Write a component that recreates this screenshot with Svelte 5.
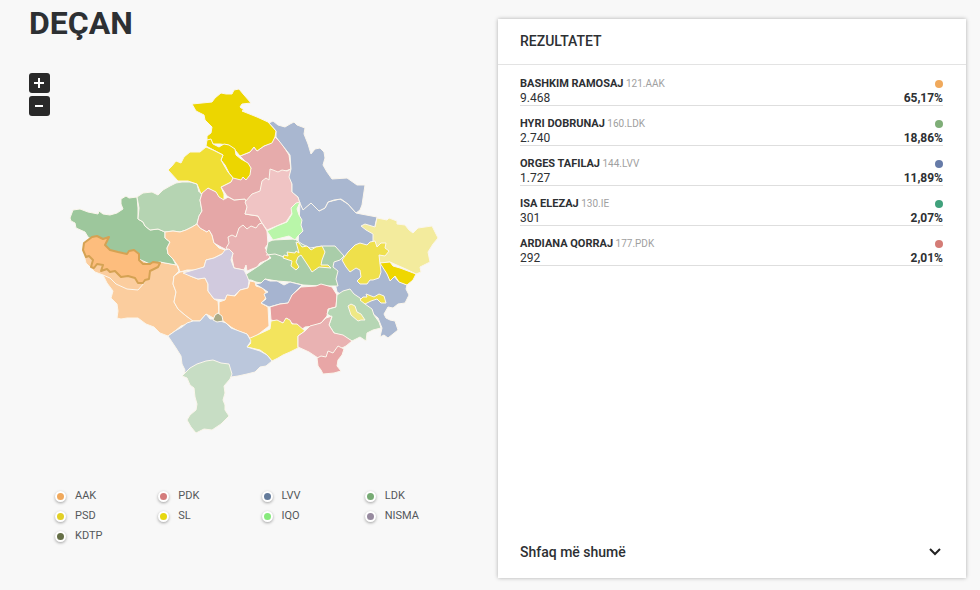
<script lang="ts">
	interface Region {
		id: string;
		fill: string;
		d: string;
	}

	interface Candidate {
		name: string;
		party: string;
		votes: string;
		percent: string;
		color: string;
	}

	// larger areas come first, enclaves are painted over them
	const regions: Region[] = [
		{ id: 'gjakove', fill: '#fbcd9e', d: 'M84 255L86 263L91 268L95 272L103 275L107 283L113 291L111 298L117 304L118 311L117 318L121 319L127 318L138 318L146 324L154 327L160 333L168 336L175 331L181 326L190 323L193 321L185 315L178 309L174 302L176 292L173 284L174 276L179 271L177 265L160 262L130 248L100 250Z' },
		{ id: 'peje', fill: '#9dc79c', d: 'M70 218L73 210L80 209L88 212L98 214L99 211L103 214L110 215L117 213L123 209L121 204L121 199L126 196L129 198L137 197L138 208L138 219L143 222L145 226L150 230L158 229L165 232L165 238L170 242L167 248L168 254L173 259L176 265L160 262L150 264L141 260L130 254L110 252L100 245L88 237L85 232L76 228L75 223L71 221Z' },
		{ id: 'istog', fill: '#b5d4b2', d: 'M137 197L143 193L152 192L158 195L163 190L170 186L176 183L182 182L190 182L197 184L199 192L203 192L200 200L202 211L199 216L197 224L192 227L186 230L180 232L173 231L165 232L158 229L150 230L145 226L143 222L138 219L139 208Z' },
		{ id: 'kline', fill: '#fccb9a', d: 'M165 232L173 231L180 232L186 230L192 227L197 224L200 228L207 232L209 230L212 235L214 243L219 248L228 251L222 254L214 258L206 260L204 267L196 270L187 270L180 272L178 266L173 259L168 254L167 248L170 242L165 238Z' },
		{ id: 'rahovec', fill: '#fccb9a', d: 'M180 272L187 271L190 276L198 279L205 278L208 284L208 291L214 299L218 301L219 312L215 319L210 316L206 314L200 321L193 321L185 315L178 309L174 302L176 292L173 284L174 276Z' },
		{ id: 'skenderaj', fill: '#e5a7a7', d: 'M203 190L208 188L215 191L225 199L228 197L234 200L245 199L248 205L245 214L258 216L262 223L267 230L258 240L236 250L227 250L221 247L214 243L212 235L209 230L207 232L200 228L197 224L199 216L202 211L200 200Z' },
		{ id: 'mitrovice', fill: '#e6abab', d: 'M240 156L250 152L254 147L257 151L264 146L271 143L275 137L282 144L289 155L291 169L283 172L276 182L262 194L247 203L245 199L234 200L227 196L221 187L231 182L233 177L248 177L251 168L247 163Z' },
		{ id: 'vushtrri', fill: '#f0c4c4', d: 'M270 169L273 170L278 172L282 170L287 171L291 169L290 177L292 184L292 192L298 197L300 203L293 207L292 213L286 222L267 230L262 223L258 216L245 214L247 207L245 202L252 194L260 191L262 181L266 178L269 180Z' },
		{ id: 'drenas', fill: '#e9b2b2', d: 'M228 237L232 235L236 237L239 228L243 225L247 229L251 226L256 228L259 224L262 223L267 231L268 244L265 248L271 256L267 260L260 263L257 267L247 271L246 265L244 270L234 268L232 258L233 253L226 248L229 243Z' },
		{ id: 'prishtine', fill: '#a9b7d0', d: 'M300 203L303 209L311 203L319 211L325 208L328 202L340 199L348 204L356 213L361 214L377 217L375 226L385 242L382 262L398 281L407 285L406 289L409 295L405 303L398 304L393 308L388 307L384 314L386 318L390 320L395 321L398 330L388 338L384 335L380 337L382 328L378 318L366 308L337 292L332 268L298 245Z' },
		{ id: 'podujeve', fill: '#a9b7d0', d: 'M269 123L273 121L278 125L285 127L290 124L294 122L297 125L305 128L304 134L308 144L311 154L315 149L320 148L324 152L325 158L323 165L327 172L332 179L347 178L357 185L365 185L362 205L360 210L356 213L348 204L341 199L334 200L328 202L325 208L319 211L314 206L311 203L303 210L300 203L298 197L292 192L292 184L289 177L291 169L290 155L283 146L276 137L276 131Z' },
		{ id: 'lipjan', fill: '#a9cda9', d: 'M245 275L251 271L260 265L264 262L271 258L266 252L268 242L273 240L295 239L302 244L310 248L323 246L335 246L344 256L340 260L334 262L333 267L338 271L336 279L338 286L321 286L303 285L290 282L277 281L265 279L261 283L256 282L251 280L246 280Z' },
		{ id: 'obiliq', fill: '#b9f6a9', d: 'M267 231L277 226L287 222L292 214L291 208L296 203L300 202L297 209L299 215L302 220L301 225L303 231L298 236L295 240L289 236L281 238L273 240Z' },
		{ id: 'gracanice', fill: '#ecdf3c', d: 'M283 258L284 255L288 256L287 252L295 253L296 251L299 253L296 242L299 243L302 247L307 246L311 250L316 247L322 246L325 252L322 260L321 265L328 265L331 268L319 267L312 272L309 267L305 261L301 255L298 257L296 262L299 267L296 270L291 266L292 261Z' },
		{ id: 'leposaviq', fill: '#ecd600', d: 'M192 104L202 103L212 102L215 98L221 93L226 94L232 94L234 90L239 89L244 95L251 103L242 104L240 107L244 110L242 111L257 117L268 122L276 131L275 137L272 143L264 146L257 151L254 147L250 152L240 156L235 150L228 145L220 144L213 144L207 140L207 136L211 133L212 127L205 120L204 115L196 111Z' },
		{ id: 'zvecan', fill: '#ecd600', d: 'M207 140L211 139L213 144L219 147L224 144L229 145L235 149L236 155L241 159L248 163L251 168L250 175L246 180L243 177L241 180L233 178L229 173L225 165L221 160L223 155L206 146Z' },
		{ id: 'zubin', fill: '#f0df35', d: 'M168 170L172 166L176 161L181 163L184 157L190 152L200 152L206 147L213 150L223 155L221 160L225 167L228 172L233 178L231 182L221 187L224 194L224 200L219 197L216 192L208 188L201 194L197 184L188 181L178 181Z' },
		{ id: 'malisheve', fill: '#d1cade', d: 'M183 273L197 269L204 267L206 260L214 258L222 254L225 250L229 249L233 253L231 260L234 268L244 270L247 276L249 281L248 288L240 290L234 296L227 295L225 300L214 299L208 291L208 284L205 278L198 279L190 276Z' },
		{ id: 'suhareke', fill: '#fdc690', d: 'M219 302L225 300L227 295L235 296L240 290L248 288L250 281L255 282L256 286L263 288L267 294L265 299L261 303L268 307L269 326L251 340L247 334L238 331L231 327L226 323L219 318Z' },
		{ id: 'shtime', fill: '#a6b4d0', d: 'M255 284L261 283L265 279L270 281L277 281L284 285L290 282L302 285L297 290L292 295L289 303L280 304L269 307L261 303L266 299L264 294L268 292L262 288Z' },
		{ id: 'ferizaj', fill: '#e69f9f', d: 'M270 307L280 304L288 303L292 295L301 287L316 286L321 284L332 287L337 295L336 307L328 309L327 316L321 323L314 326L305 327L301 330L292 323L287 318L284 323L271 320Z' },
		{ id: 'shterpce', fill: '#f3e45d', d: 'M248 339L257 335L270 329L271 321L277 320L283 323L286 318L290 320L292 324L297 324L305 331L298 336L298 348L290 352L283 355L278 358L272 361L267 355L260 350L247 347L251 343Z' },
		{ id: 'prizren', fill: '#bbc7dc', d: 'M168 336L175 331L182 327L187 323L193 321L200 321L206 314L210 319L215 319L226 323L231 328L247 334L251 341L247 347L260 351L267 355L272 361L266 366L260 367L255 372L247 374L238 376L210 380L184 376L185 370L182 364L181 356L176 348Z' },
		{ id: 'dragash', fill: '#c7ddc4', d: 'M182 376L190 368L197 364L206 361L213 360L221 363L229 364L232 374L230 379L224 386L225 393L223 400L225 405L225 410L229 416L221 424L212 430L204 429L196 433L191 427L187 420L190 415L196 410L197 404L195 397L194 388L190 385L187 378Z' },
		{ id: 'mamushe', fill: '#a9ab87', d: 'M213 320L215 315L218 313L222 316L223 321L217 322Z' },
		{ id: 'kamenice', fill: '#f3eb9d', d: 'M361 226L365 224L375 227L377 218L387 220L389 218L397 221L397 224L405 225L409 230L413 233L418 228L432 226L438 238L433 244L428 252L430 262L420 267L421 272L416 274L408 270L390 262L380 263L376 252L373 242L373 234L366 230Z' },
		{ id: 'novoberde', fill: '#efe04b', d: 'M342 260L348 252L355 245L360 243L367 245L370 242L375 241L377 247L381 243L386 243L385 248L389 251L385 256L379 255L380 264L381 272L379 278L373 280L370 280L367 284L360 284L357 281L361 277L360 270L356 268L350 272L346 267Z' },
		{ id: 'ranillug', fill: '#efd700', d: 'M380 263L390 262L393 266L400 268L408 271L416 274L413 280L407 285L399 282L395 276L390 281L387 274Z' },
		{ id: 'viti', fill: '#b6d6b4', d: 'M337 295L343 291L350 289L354 294L360 298L365 304L372 309L374 315L379 322L381 328L373 330L367 333L366 341L360 337L352 341L343 336L334 333L329 325L332 317L327 314L329 309L336 307Z' },
		{ id: 'partesh', fill: '#efe04b', d: 'M360 300L363 297L367 297L366 294L374 297L379 294L384 296L386 303L381 303L377 299L371 301L365 304Z' },
		{ id: 'kllokot', fill: '#eee884', d: 'M348 306L351 304L355 306L357 312L361 314L365 320L361 320L358 321L351 315Z' },
		{ id: 'kacanik', fill: '#e9b2b2', d: 'M298 336L305 331L310 326L321 323L326 318L332 316L329 325L334 333L343 335L352 341L346 346L338 350L333 357L318 358L309 352L298 347Z' },
		{ id: 'hani', fill: '#e8a6a6', d: 'M317 358L321 356L326 357L328 351L333 353L338 346L344 349L342 355L338 360L337 366L341 371L334 373L323 374L321 370L318 366Z' }
	];

	const borders = ['M103 275L110 278L116 284L127 289L138 290L145 282', 'M266 255L275 254L284 257'];

	const selected =
		'M92 237L97 236L103 239L109 237L105 245L110 250L118 252L127 254L129 251L134 250L139 254L139 260L143 264L150 264L153 262L160 263L158 267L150 271L149 279L145 280L143 283L138 283L135 278L128 276L121 277L115 271L110 272L107 269L101 271L103 265L97 264L94 268L91 267L93 260L89 256L86 257L83 250L84 243Z';

	const candidates: Candidate[] = [
		{ name: 'BASHKIM RAMOSAJ', party: '121.AAK', votes: '9.468', percent: '65,17%', color: '#f0a95c' },
		{ name: 'HYRI DOBRUNAJ', party: '160.LDK', votes: '2.740', percent: '18,86%', color: '#7fae78' },
		{ name: 'ORGES TAFILAJ', party: '144.LVV', votes: '1.727', percent: '11,89%', color: '#667ba8' },
		{ name: 'ISA ELEZAJ', party: '130.IE', votes: '301', percent: '2,07%', color: '#40a17c' },
		{ name: 'ARDIANA QORRAJ', party: '177.PDK', votes: '292', percent: '2,01%', color: '#d47c76' }
	];

	const parties = [
		{ name: 'AAK', color: '#f0a95c' },
		{ name: 'PDK', color: '#d47c7c' },
		{ name: 'LVV', color: '#647b9b' },
		{ name: 'LDK', color: '#77ab74' },
		{ name: 'PSD', color: '#e2d026' },
		{ name: 'SL', color: '#e6d80f' },
		{ name: 'IQO', color: '#87ea7c' },
		{ name: 'NISMA', color: '#978a9f' },
		{ name: 'KDTP', color: '#656f46' }
	];

	let zoom = $state(1);
</script>

<main class="page">
	<section class="overview">
		<h1>DEÇAN</h1>
		<div class="map">
			<svg viewBox="29 73 468 400" role="img" aria-label="Deçan">
				<g transform="translate(254 260) scale({zoom}) translate(-254 -260)">
					{#each regions as region (region.id)}
						<path class="region" d={region.d} fill={region.fill} />
					{/each}
					{#each borders as d}
						<path class="border" {d} />
					{/each}
					<path class="selected" d={selected} />
				</g>
			</svg>
			<div class="zoom">
				<button type="button" aria-label="+" onclick={() => (zoom = Math.min(zoom * 1.25, 4))}>
					<svg viewBox="0 0 20 20"><path d="M5 10H15M10 5V15" /></svg>
				</button>
				<button type="button" aria-label="−" onclick={() => (zoom = Math.max(zoom / 1.25, 1))}>
					<svg viewBox="0 0 20 20"><path d="M6 10H14" /></svg>
				</button>
			</div>
		</div>
		<ul class="legend">
			{#each parties as party (party.name)}
				<li><span class="marker" style:background={party.color}></span>{party.name}</li>
			{/each}
		</ul>
	</section>

	<section class="panel">
		<h2>REZULTATET</h2>
		<ul class="results">
			{#each candidates as candidate (candidate.name)}
				<li>
					<div class="line">
						<span class="name"><strong>{candidate.name}</strong> {candidate.party}</span>
						<span class="dot" style:background={candidate.color}></span>
					</div>
					<div class="line">
						<span>{candidate.votes}</span>
						<b>{candidate.percent}</b>
					</div>
				</li>
			{/each}
		</ul>
		<button type="button" class="more">
			Shfaq më shumë
			<svg viewBox="0 0 12 8" aria-hidden="true"><path d="M1 1L6 6L11 1" /></svg>
		</button>
	</section>
</main>

<style>
	:global(body) {
		background: #f8f8f8;
	}

	.page {
		display: grid;
		grid-template-columns: 1fr 1fr;
		column-gap: 1px;
		box-sizing: border-box;
		min-height: 100vh;
		padding: 0 14px 0 29px;
		font-family: Roboto, 'Liberation Sans', sans-serif;
		font-size: 12px;
		color: #2d3033;
	}

	h1 {
		margin: 4px 0 31px;
		font-size: 32px;
		font-weight: 700;
		line-height: 38px;
	}

	ul {
		margin: 0;
		padding: 0;
		list-style: none;
	}

	.map {
		position: relative;
	}

	.map > svg {
		display: block;
		width: 100%;
	}

	.region {
		stroke: #fbf6ec;
		stroke-width: 1;
		stroke-linejoin: round;
	}

	.border {
		fill: none;
		stroke: #fbf6ec;
		stroke-width: 1;
	}

	.selected {
		fill: #fdbd7d;
		stroke: #d5a253;
		stroke-width: 2;
		stroke-linejoin: round;
	}

	.zoom {
		position: absolute;
		top: 0;
		left: 0;
		display: grid;
		gap: 3px;
	}

	.zoom button {
		width: 21px;
		height: 20px;
		padding: 0;
		background: #292929;
		border: 0;
		border-radius: 3px;
		cursor: pointer;
	}

	.zoom svg {
		display: block;
		width: 20px;
		height: 20px;
		stroke: #fff;
		stroke-width: 2;
	}

	.legend {
		display: grid;
		grid-template-columns: repeat(4, 1fr);
		padding: 13px 29px 0 26px;
		font-size: 11px;
		line-height: 20px;
		color: #54575a;
	}

	.legend li {
		display: flex;
		align-items: center;
		gap: 9px;
	}

	.marker {
		width: 7px;
		height: 7px;
		border: 2px solid #fff;
		border-radius: 50%;
		box-shadow: 0 1px 3px rgba(0, 0, 0, 0.35);
	}

	.panel {
		display: flex;
		flex-direction: column;
		margin: 19px 0 12px;
		background: #fff;
		box-shadow: 0 0 4px rgba(0, 0, 0, 0.3);
	}

	h2 {
		margin: 0;
		padding: 12px 22px;
		font-size: 14px;
		font-weight: 500;
		line-height: 21px;
		border-bottom: 1px solid #e3e3e3;
	}

	.results {
		flex: 1;
		display: flex;
		flex-direction: column;
		gap: 11px;
		padding: 12px 23px 0 22px;
	}

	.results li {
		border-bottom: 1px solid #dedede;
	}

	.line {
		display: flex;
		align-items: center;
		justify-content: space-between;
		line-height: 14px;
	}

	.name {
		font-size: 10px;
		color: #a0a0a0;
	}

	strong {
		font-size: 11px;
		font-weight: 700;
		color: #2d3033;
	}

	b {
		font-weight: 700;
	}

	.dot {
		width: 8px;
		height: 8px;
		border-radius: 50%;
	}

	.more {
		display: flex;
		align-items: center;
		justify-content: space-between;
		padding: 16px 25px 16px 22px;
		font: inherit;
		font-size: 14px;
		font-weight: 500;
		line-height: 20px;
		color: inherit;
		background: none;
		border: 0;
		cursor: pointer;
	}

	.more svg {
		width: 12px;
		height: 8px;
		fill: none;
		stroke: #222;
		stroke-width: 2;
	}
</style>
